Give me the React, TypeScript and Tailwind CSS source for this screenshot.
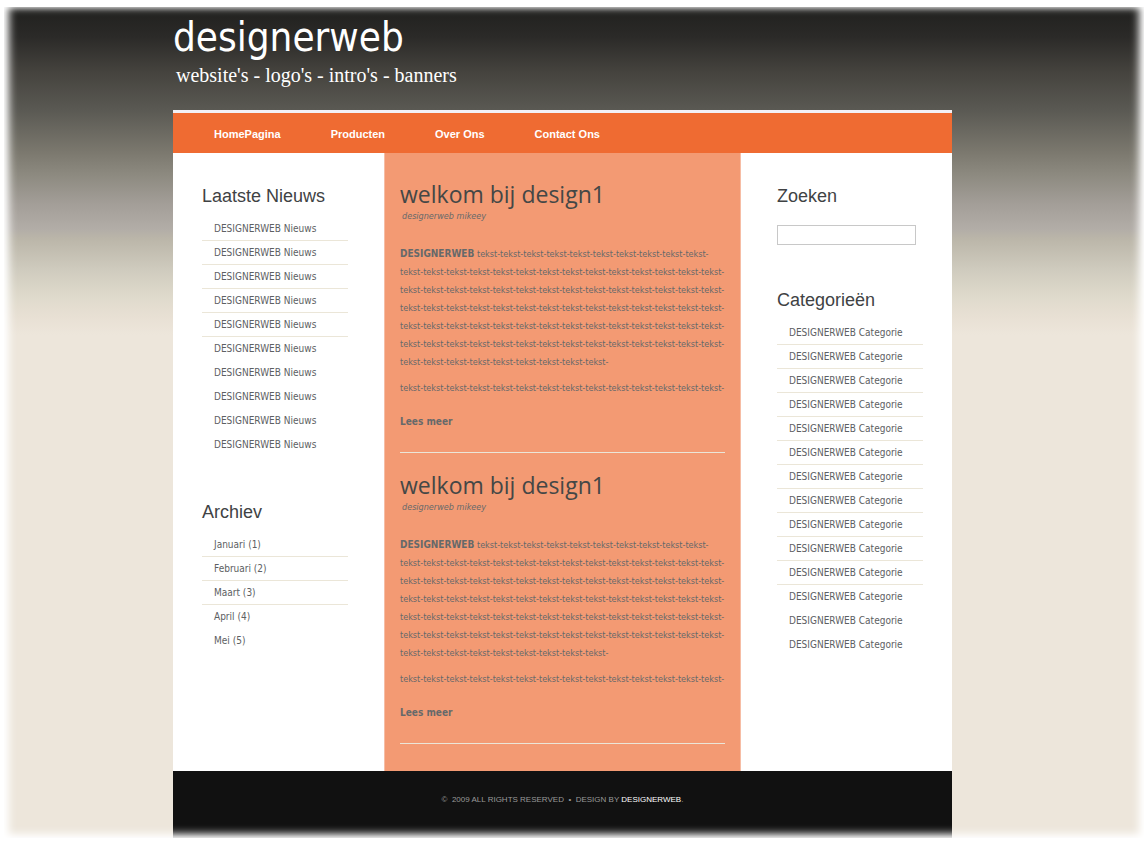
import type { ReactNode } from "react";

const news = Array.from({ length: 10 }, () => "DESIGNERWEB Nieuws");
const archive = ["Januari (1)", "Februari (2)", "Maart (3)", "April (4)", "Mei (5)"];
const categories = Array.from({ length: 14 }, () => "DESIGNERWEB Categorie");
const navItems = ["HomePagina", "Producten", "Over Ons", "Contact Ons"];

const tekst = (count: number) => "tekst-".repeat(count);

function SideHeading({ children }: { children: ReactNode }) {
  return (
    <h2 className="font-['Liberation_Sans',sans-serif] text-[18px] leading-6 text-[#404244]">
      {children}
    </h2>
  );
}

function LinkList({ items, ruled }: { items: string[]; ruled: number }) {
  return (
    <ul className="mt-[9px] w-[146px] text-[10px] leading-[23px] text-[#5c6062]">
      {items.map((item, i) => (
        <li
          key={i}
          className={i < ruled ? "h-6 border-b border-[#ebe6d8] pl-3" : "h-6 pl-3"}
        >
          <a href="#">{item}</a>
        </li>
      ))}
    </ul>
  );
}

function Article() {
  return (
    <article className="border-b border-[#ebe6d8] pb-[21px]">
      <h2 className="font-['Open_Sans',sans-serif] text-[23px] leading-7 text-[#444746]">
        welkom bij design1
      </h2>
      <p className="pl-0.5 text-[9px] leading-4 italic">designerweb mikeey</p>
      <p className="mt-[21px] text-[9px] leading-[18px]">
        <strong className="text-[10px]">DESIGNERWEB</strong> {tekst(10)}
        <br />
        {tekst(79)}
      </p>
      <p className="mt-2 text-[9px] leading-[18px]">{tekst(14)}</p>
      <a href="#" className="mt-4 block text-[10px] leading-[18px] font-bold">
        Lees meer
      </a>
    </article>
  );
}

export default function App() {
  return (
    <div className="bg-white px-1 pt-[7px] pb-1 font-['DejaVu_Sans_Condensed','DejaVu_Sans',sans-serif]">
      <div className="relative bg-[#ede6db] bg-[linear-gradient(to_bottom,#20201e_0px,#2b2a28_30px,#45433e_65px,#5a5953_103px,#7b786e_145px,#8d8a80_168px,#a39e98_197px,#b2ada7_222px,#bbb6a9_232px,#d0ccbf_264px,#dfdacc_290px,#e8e0d4_310px,#ede6db_328px)] bg-no-repeat pr-[23px]">
        <div className="mx-auto w-full max-w-[779px]">
          <header className="pt-[5px] pb-[23px] text-white">
            <h1 className="text-[40px] leading-[51px]">designerweb</h1>
            <p className="pl-[3px] font-['Liberation_Serif',serif] text-[20px] leading-6">
              website's - logo's - intro's - banners
            </p>
          </header>

          <nav className="flex h-[43px] items-center gap-[50px] border-t-[3px] border-[#f3f0f5] bg-[#ef6b32] pt-0.5 pl-[41px] font-['Liberation_Sans',sans-serif] text-[11px] font-bold text-white">
            {navItems.map((item) => (
              <a key={item} href="#">
                {item}
              </a>
            ))}
          </nav>

          <div className="grid grid-cols-[211px_1fr_211px] bg-white">
            <aside className="flex flex-col gap-[43px] pt-[31px] pl-[29px]">
              <section>
                <SideHeading>Laatste Nieuws</SideHeading>
                <LinkList items={news} ruled={5} />
              </section>
              <section>
                <SideHeading>Archiev</SideHeading>
                <LinkList items={archive} ruled={3} />
              </section>
            </aside>

            <main className="flex flex-col gap-[18px] border-x border-[#f6bda5] bg-[#f39a73] px-[15px] pt-[27px] pb-[27px] text-[#66696a]">
              <Article />
              <Article />
            </main>

            <aside className="flex flex-col gap-[43px] pt-[31px] pl-9">
              <section>
                <SideHeading>
                  <label htmlFor="search">Zoeken</label>
                </SideHeading>
                <input
                  id="search"
                  type="text"
                  className="mt-[17px] block h-5 w-[139px] border border-[#c8c8c8] bg-white px-1 text-[10px]"
                />
              </section>
              <section>
                <SideHeading>Categorieën</SideHeading>
                <LinkList items={categories} ruled={11} />
              </section>
            </aside>
          </div>

          <footer className="bg-[#111111] pt-[21px] pb-[30px] text-center font-['Liberation_Sans',sans-serif] text-[8px] leading-4 text-[#999999]">
            ©&nbsp; 2009 ALL RIGHTS RESERVED &nbsp;•&nbsp; DESIGN BY{" "}
            <a href="#" className="text-white">
              DESIGNERWEB
            </a>
            .
          </footer>
        </div>
        <div className="pointer-events-none absolute inset-0 shadow-[inset_9px_0_8px_-4px_#fff,inset_-9px_0_8px_-4px_#fff,inset_0_5px_9px_-5px_#fff,inset_0_-8px_9px_-4px_#fff]" />
      </div>
    </div>
  );
}
